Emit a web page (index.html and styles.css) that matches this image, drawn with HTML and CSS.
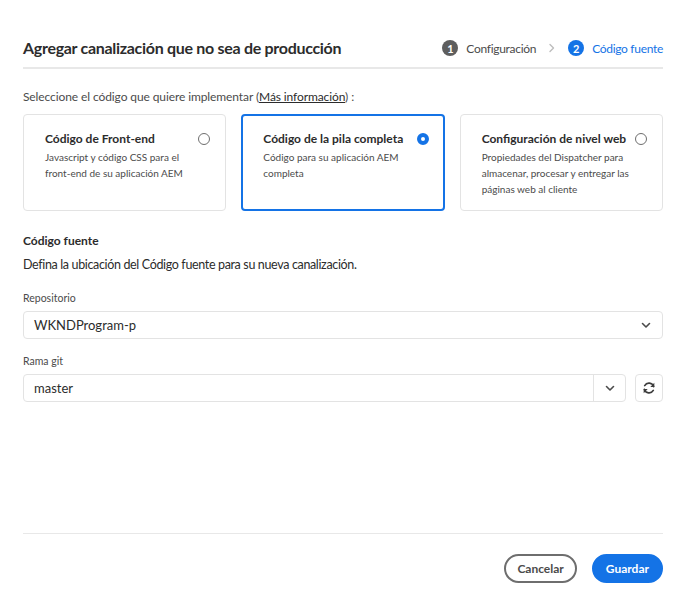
FILE: index.html
```html
<!DOCTYPE html>
<html lang="es">
<head>
<meta charset="utf-8">
<link rel="stylesheet" href="styles.css">
</head>
<body>
<div class="dialog">
  <header class="head">
    <h1 class="title">Agregar canalización que no sea de producción</h1>
    <div class="steps">
      <span class="step-num done">1</span>
      <span class="step-label">Configuración</span>
      <svg class="step-chev" width="8" height="10" viewBox="0 0 8 10"><path d="M2 1.5 L5.5 5 L2 8.5" fill="none" stroke="#bdbdbd" stroke-width="1.4" stroke-linecap="round" stroke-linejoin="round"/></svg>
      <span class="step-num active">2</span>
      <span class="step-label active-label">Código fuente</span>
    </div>
  </header>

  <p class="intro">Seleccione el código que quiere implementar (<a class="link" href="#">Más información</a>) :</p>

  <div class="cards">
    <div class="card">
      <div class="card-top">
        <span class="card-title">Código de Front-end</span>
        <span class="radio"></span>
      </div>
      <p class="card-desc">Javascript y código CSS para el front-end de su aplicación AEM</p>
    </div>
    <div class="card selected">
      <div class="card-top">
        <span class="card-title">Código de la pila completa</span>
        <span class="radio checked"></span>
      </div>
      <p class="card-desc">Código para su aplicación AEM completa</p>
    </div>
    <div class="card">
      <div class="card-top">
        <span class="card-title">Configuración de nivel web</span>
        <span class="radio"></span>
      </div>
      <p class="card-desc">Propiedades del Dispatcher para almacenar, procesar y entregar las páginas web al cliente</p>
    </div>
  </div>

  <h2 class="section-title">Código fuente</h2>
  <p class="section-desc">Defina la ubicación del Código fuente para su nueva canalización.</p>

  <label class="field-label">Repositorio</label>
  <div class="select">
    <span class="select-value">WKNDProgram-p</span>
    <svg class="chev" width="10" height="7" viewBox="0 0 10 7"><path d="M1.5 1.5 L5 5 L8.5 1.5" fill="none" stroke="#4b4b4b" stroke-width="1.6" stroke-linecap="round" stroke-linejoin="round"/></svg>
  </div>

  <label class="field-label git">Rama git</label>
  <div class="git-row">
    <div class="combo">
      <span class="select-value">master</span>
      <span class="combo-btn">
        <svg width="10" height="7" viewBox="0 0 10 7"><path d="M1.5 1.5 L5 5 L8.5 1.5" fill="none" stroke="#4b4b4b" stroke-width="1.6" stroke-linecap="round" stroke-linejoin="round"/></svg>
      </span>
    </div>
    <button class="refresh">
      <svg width="14" height="14" viewBox="0 0 14 14"><path d="M11.6 5.6 A4.9 4.9 0 0 0 2.7 4.6" fill="none" stroke="#3c3c3c" stroke-width="1.7" stroke-linecap="round"/><path d="M12.3 1.8 L12.3 5.9 L8.3 5.9 Z" fill="#3c3c3c"/><path d="M2.4 8.4 A4.9 4.9 0 0 0 11.3 9.4" fill="none" stroke="#3c3c3c" stroke-width="1.7" stroke-linecap="round"/><path d="M1.7 12.2 L1.7 8.1 L5.7 8.1 Z" fill="#3c3c3c"/></svg>
    </button>
  </div>

  <div class="spacer"></div>

  <footer class="foot">
    <button class="btn secondary">Cancelar</button>
    <button class="btn primary">Guardar</button>
  </footer>
</div>
</body>
</html>
```

FILE: styles.css
```css
* { box-sizing: border-box; }
html, body { margin: 0; background: #fff; }
body {
  font-family: Lato, "Noto Sans", sans-serif;
  color: #2c2c2c;
  width: 698px;
  height: 614px;
}
.dialog {
  padding: 0 35px 0 23px;
  height: 614px;
  display: flex;
  flex-direction: column;
}
.head {
  display: flex;
  align-items: center;
  justify-content: space-between;
  padding-top: 37px;
  padding-bottom: 8px;
  border-bottom: 2px solid #e8e8e8;
}
.title {
  margin: 0;
  font-size: 16px;
  font-weight: 700;
  color: #2c2c2c;
  line-height: 22px;
  letter-spacing: -0.3px;
}
.steps {
  display: flex;
  align-items: center;
  font-size: 12px;
  letter-spacing: -0.3px;
  color: #4b4b4b;
}
.step-num {
  width: 16px;
  height: 16px;
  border-radius: 50%;
  color: #fff;
  font-size: 11px;
  font-weight: 700;
  letter-spacing: 0;
  display: inline-flex;
  align-items: center;
  justify-content: center;
  margin-right: 8px;
}
.step-num.done { background: #5e5e5e; }
.step-num.active { background: #1473e6; }
.step-chev { margin: 0 12px 0 12px; }
.active-label { color: #1473e6; }
.intro {
  margin: 19px 0 0;
  font-size: 12px;
  letter-spacing: -0.1px;
  color: #4b4b4b;
  line-height: 18px;
}
.link { color: #2c2c2c; text-decoration: underline; }
.cards {
  display: grid;
  grid-template-columns: repeat(3, 1fr);
  gap: 15px;
  margin-top: 8px;
}
.card {
  height: 97px;
  border: 1px solid #e3e3e3;
  border-radius: 4px;
  padding: 16px 15px 0 21px;
}
.card.selected {
  border: 2px solid #1473e6;
  padding: 15px 14px 0 20px;
}
.card-top {
  display: flex;
  align-items: center;
  justify-content: space-between;
}
.card-title {
  font-size: 12px;
  font-weight: 700;
  color: #2c2c2c;
  line-height: 16px;
}
.radio {
  width: 12px;
  height: 12px;
  border-radius: 50%;
  border: 1.5px solid #6e6e6e;
  flex: none;
}
.radio.checked {
  border: 4px solid #1473e6;
  background: #fff;
}
.card-desc {
  margin: 2px 0 0;
  font-size: 10px;
  line-height: 16px;
  color: #4b4b4b;
  padding-right: 8px;
}
.section-title {
  margin: 22px 0 0;
  font-size: 12px;
  font-weight: 700;
  line-height: 16px;
  color: #2c2c2c;
}
.section-desc {
  margin: 7px 0 0;
  font-size: 12.5px;
  letter-spacing: -0.35px;
  line-height: 18px;
  color: #2c2c2c;
}
.field-label {
  display: block;
  margin-top: 17px;
  font-size: 10.5px;
  line-height: 14px;
  color: #4b4b4b;
}
.field-label.git { margin-top: 15px; }
.select {
  margin-top: 6px;
  height: 28px;
  border: 1px solid #e3e3e3;
  border-radius: 4px;
  display: flex;
  align-items: center;
  justify-content: space-between;
  padding: 0 11px 0 10px;
}
.select-value {
  font-size: 13px;
  color: #2c2c2c;
}
.git-row {
  margin-top: 6px;
  display: flex;
  gap: 9px;
}
.combo {
  flex: 1;
  height: 28px;
  border: 1px solid #e3e3e3;
  border-radius: 4px;
  display: flex;
  align-items: center;
  justify-content: space-between;
  padding-left: 10px;
}
.combo-btn {
  width: 32px;
  height: 100%;
  border-left: 1px solid #e3e3e3;
  display: flex;
  align-items: center;
  justify-content: center;
}
.refresh {
  width: 28px;
  height: 28px;
  border: 1px solid #e3e3e3;
  border-radius: 4px;
  background: #fff;
  display: flex;
  align-items: center;
  justify-content: center;
  padding: 0;
}
.spacer { flex: 1; }
.foot {
  border-top: 1px solid #e8e8e8;
  padding-top: 20px;
  margin-bottom: 31px;
  display: flex;
  justify-content: flex-end;
  gap: 15px;
}
.btn {
  height: 29px;
  border-radius: 15px;
  font-family: inherit;
  font-size: 12px;
  font-weight: 700;
  padding: 0 12px;
}
.btn.secondary {
  background: #fff;
  border: 2px solid #6e6e6e;
  color: #4b4b4b;
  padding: 0 11px;
}
.btn.primary {
  background: #1473e6;
  border: 2px solid #1473e6;
  color: #fff;
}
```
